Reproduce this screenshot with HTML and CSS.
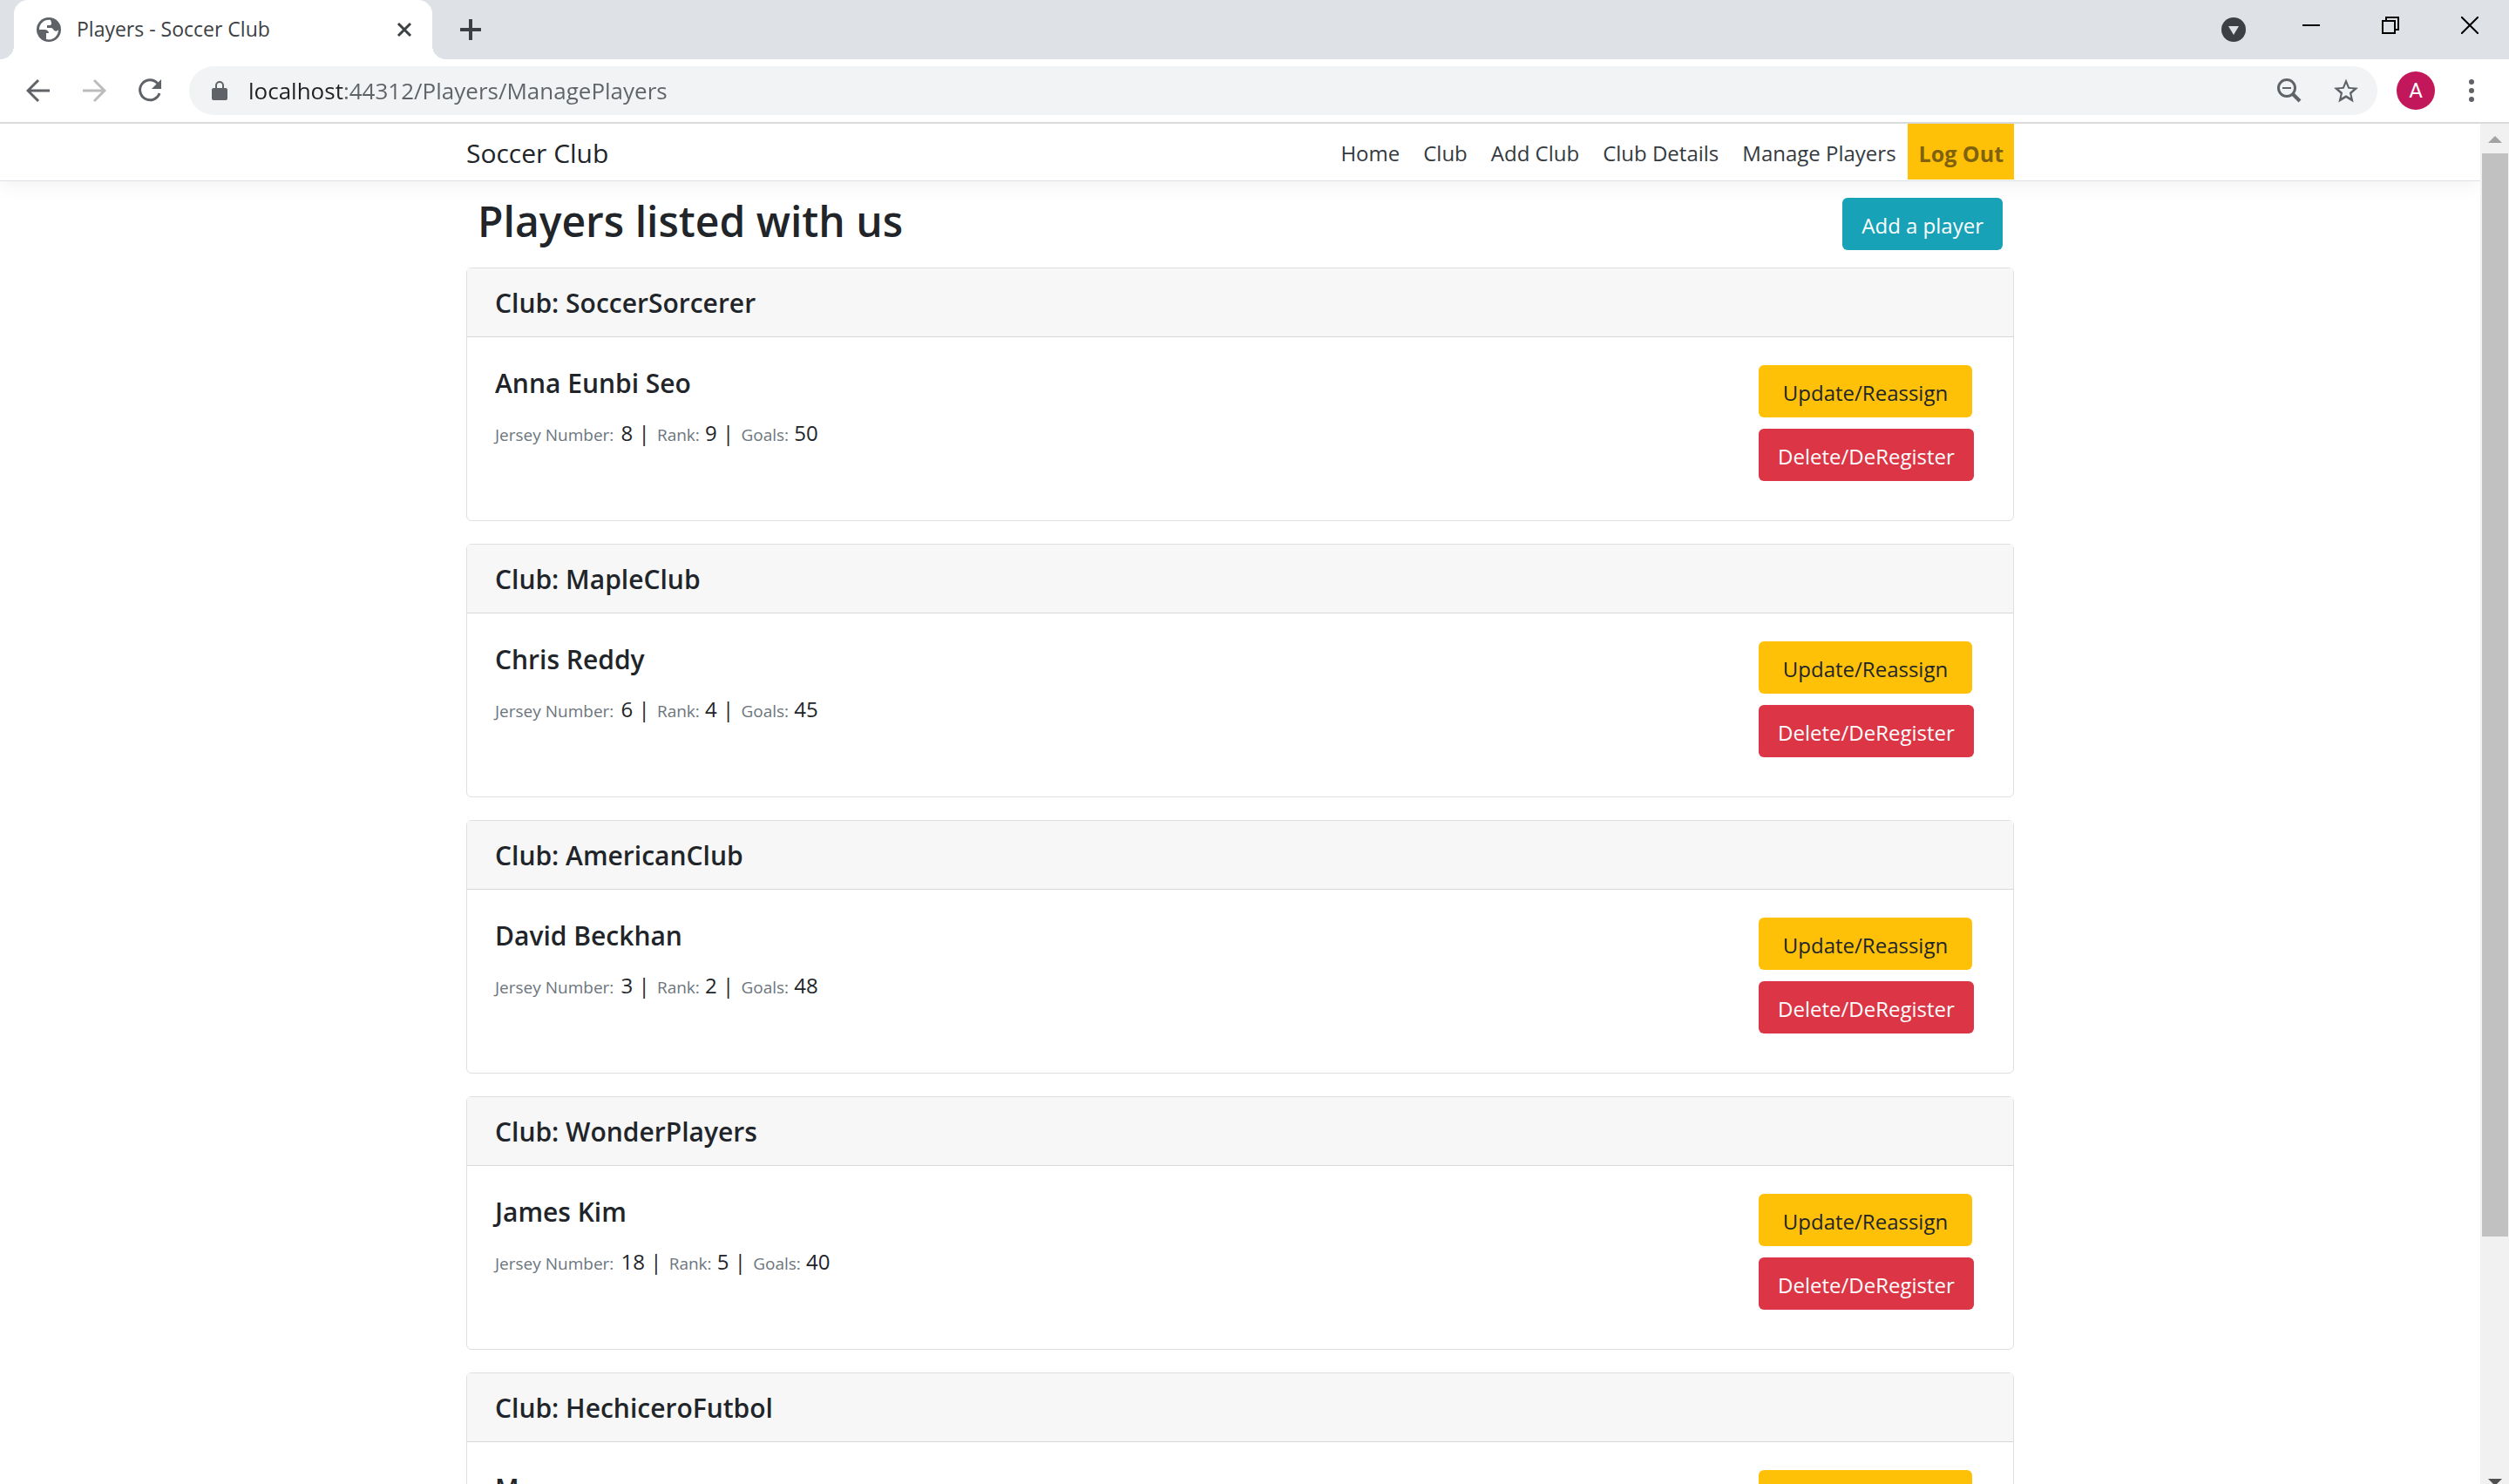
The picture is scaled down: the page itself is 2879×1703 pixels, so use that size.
FILE: index.html
```html
<!DOCTYPE html>
<html lang="en">
<head>
<meta charset="utf-8">
<meta name="viewport" content="width=device-width, initial-scale=1">
<title>Players - Soccer Club</title>
<link rel="stylesheet" href="styles.css">
</head>
<body>
<div class="browser">
  <div class="tabstrip">
    <div class="tab">
      <svg class="favicon" viewBox="0 0 28 28" aria-hidden="true"><circle cx="14" cy="14" r="14" fill="#5f6368"/><path d="M16 3C9 2 3 7 3 14h6c3 0 5 2 5 4h-3v7c8 2 14-4 14-11-1 2-3 2-5 1-1-2-2-3-4-3h-4V9h3c2 0 2-2 2-3z" fill="#fff"/></svg>
      <span class="tab-title">Players - Soccer Club</span>
      <button class="icon-btn" aria-label="Close tab"><svg width="18" height="18" viewBox="0 0 18 18"><path d="M2 2l14 14M16 2L2 16" stroke="#3c4043" stroke-width="3"/></svg></button>
    </div>
    <button class="icon-btn new-tab" aria-label="New tab"><svg width="24" height="24" viewBox="0 0 24 24"><path d="M12 1v22M1 12h22" stroke="#3c4043" stroke-width="4" stroke-linecap="round"/></svg></button>
    <div class="window-controls">
      <button class="icon-btn tab-search" aria-label="Search tabs"><svg width="28" height="28" viewBox="0 0 28 28"><circle cx="14" cy="14" r="14" fill="#3c4043"/><path d="M8 10h12l-6 10z" fill="#dee1e6"/></svg></button>
      <button class="icon-btn" aria-label="Minimize"><svg width="20" height="20" viewBox="0 0 20 20"><path d="M0 10h20" stroke="#000" stroke-width="2"/></svg></button>
      <button class="icon-btn" aria-label="Restore"><svg width="20" height="20" viewBox="0 0 20 20" fill="none" stroke="#000" stroke-width="2"><path d="M1 5h14v14H1zM5 5V1h14v14h-4"/></svg></button>
      <button class="icon-btn" aria-label="Close"><svg width="20" height="20" viewBox="0 0 20 20"><path d="M0 0l20 20M20 0L0 20" stroke="#000" stroke-width="2"/></svg></button>
    </div>
  </div>
  <div class="toolbar">
    <div class="nav-buttons">
      <button class="icon-btn" aria-label="Back"><svg width="28" height="28" viewBox="0 0 28 28" fill="none" stroke="#5f6368" stroke-width="3"><path d="M27 14H3M14 2L2 14l12 12"/></svg></button>
      <button class="icon-btn" aria-label="Forward"><svg width="28" height="28" viewBox="0 0 28 28" fill="none" stroke="#babcbe" stroke-width="3"><path d="M1 14h24M14 2l12 12-12 12"/></svg></button>
      <button class="icon-btn" aria-label="Reload"><svg width="28" height="28" viewBox="0 0 28 28"><path d="M23 6A11.500 11.500 0 1 0 25 17" fill="none" stroke="#5f6368" stroke-width="3"/><path d="M27 1v11H16z" fill="#5f6368"/></svg></button>
    </div>
    <div class="omnibox">
      <svg width="18" height="22" viewBox="0 0 18 22" aria-hidden="true"><rect y="8" width="18" height="14" rx="2" fill="#5f6368"/><path d="M5 9V5a4 4 0 0 1 8 0v4" fill="none" stroke="#5f6368" stroke-width="2"/></svg>
      <input class="url" type="text" aria-label="Address" value="localhost:44312/Players/ManagePlayers">
      <button class="icon-btn" aria-label="Zoom"><svg width="28" height="28" viewBox="0 0 28 28" fill="none" stroke="#5f6368"><circle cx="11" cy="11" r="9.500" stroke-width="3"/><path d="M6 11h10" stroke-width="2"/><path d="M18 18l8 8" stroke-width="4"/></svg></button>
      <button class="icon-btn" aria-label="Bookmark"><svg width="28" height="28" viewBox="0 0 24 24"><path fill="#5f6368" d="M24 9.240l-8.630-.740L12 .500 8.630 8.510 0 9.240l6.550 5.680L4.580 23.500 12 18.980l7.410 4.520-1.960-8.580L24 9.240zM12 16.400l-4.520 2.730 1.200-5.140-3.980-3.460 5.260-.460L12 5.200l2.050 4.880 5.260.460-3.980 3.460 1.200 5.140L12 16.400z"/></svg></button>
    </div>
    <button class="avatar" aria-label="Profile">A</button>
    <button class="icon-btn" aria-label="Menu"><svg width="6" height="26" viewBox="0 0 6 26" fill="#5f6368"><circle cx="3" cy="3" r="3"/><circle cx="3" cy="13" r="3"/><circle cx="3" cy="23" r="3"/></svg></button>
  </div>
  <div class="viewport">
    <div class="page">
      <header class="navbar">
        <div class="container navbar-inner">
          <a class="brand" href="#">Soccer Club</a>
          <nav class="nav">
            <a href="#">Home</a>
            <a href="#">Club</a>
            <a href="#">Add Club</a>
            <a href="#">Club Details</a>
            <a href="#">Manage Players</a>
            <button class="logout">Log Out</button>
          </nav>
        </div>
      </header>
      <main class="container">
        <div class="heading">
          <h1>Players listed with us</h1>
          <button class="btn btn-info">Add a player</button>
        </div>
        <section class="card">
          <h2 class="card-header">Club: SoccerSorcerer</h2>
          <div class="card-body">
            <div>
              <h3>Anna Eunbi Seo</h3>
              <p><small>Jersey Number:</small> 8 | <small class="next">Rank:</small> 9 | <small class="next">Goals:</small> 50</p>
            </div>
            <div class="actions">
              <button class="btn btn-warning">Update/Reassign</button>
              <button class="btn btn-danger">Delete/DeRegister</button>
            </div>
          </div>
        </section>
        <section class="card">
          <h2 class="card-header">Club: MapleClub</h2>
          <div class="card-body">
            <div>
              <h3>Chris Reddy</h3>
              <p><small>Jersey Number:</small> 6 | <small class="next">Rank:</small> 4 | <small class="next">Goals:</small> 45</p>
            </div>
            <div class="actions">
              <button class="btn btn-warning">Update/Reassign</button>
              <button class="btn btn-danger">Delete/DeRegister</button>
            </div>
          </div>
        </section>
        <section class="card">
          <h2 class="card-header">Club: AmericanClub</h2>
          <div class="card-body">
            <div>
              <h3>David Beckhan</h3>
              <p><small>Jersey Number:</small> 3 | <small class="next">Rank:</small> 2 | <small class="next">Goals:</small> 48</p>
            </div>
            <div class="actions">
              <button class="btn btn-warning">Update/Reassign</button>
              <button class="btn btn-danger">Delete/DeRegister</button>
            </div>
          </div>
        </section>
        <section class="card">
          <h2 class="card-header">Club: WonderPlayers</h2>
          <div class="card-body">
            <div>
              <h3>James Kim</h3>
              <p><small>Jersey Number:</small> 18 | <small class="next">Rank:</small> 5 | <small class="next">Goals:</small> 40</p>
            </div>
            <div class="actions">
              <button class="btn btn-warning">Update/Reassign</button>
              <button class="btn btn-danger">Delete/DeRegister</button>
            </div>
          </div>
        </section>
        <section class="card">
          <h2 class="card-header">Club: HechiceroFutbol</h2>
          <div class="card-body">
            <div>
              <h3>M</h3>
            </div>
            <div class="actions">
              <button class="btn btn-warning" aria-label="Update/Reassign"></button>
            </div>
          </div>
        </section>
      </main>
    </div>
    <div class="scrollbar" aria-hidden="true">
      <svg class="arrow" width="16" height="8" viewBox="0 0 16 8"><path d="M0 8l8-8 8 8z" fill="#a3a3a3"/></svg>
      <div class="track"><div class="thumb"></div></div>
      <svg class="arrow-down" width="16" height="8" viewBox="0 0 16 8"><path d="M0 0l8 8 8-8z" fill="#505050"/></svg>
    </div>
  </div>
</div>
</body>
</html>
```
FILE: styles.css
```css
* { box-sizing: border-box; }

body {
  margin: 0;
  font: 24px/38px "Segoe UI", "Open Sans", "Noto Sans", sans-serif;
  color: #212529;
  background: #fff;
}

button, input { font: inherit; color: inherit; border: 0; margin: 0; padding: 0; background: none; }
button { cursor: pointer; }
a { color: inherit; text-decoration: none; }
svg { display: block; flex: none; }

.browser { display: flex; flex-direction: column; height: 100vh; overflow: hidden; }

.icon-btn { display: flex; align-items: center; justify-content: center; flex: none; }

/* Tab strip */
.tabstrip { display: flex; height: 68px; flex: none; padding-left: 16px; background: #dee1e6; }
.tab {
  position: relative;
  display: flex;
  align-items: center;
  width: 480px;
  padding: 0 23px 0 26px;
  background: #fff;
  border-radius: 16px 16px 0 0;
}
.tab::before, .tab::after {
  content: "";
  position: absolute;
  bottom: 0;
  width: 16px;
  height: 16px;
}
.tab::before { right: 100%; background: radial-gradient(circle at 0 0, transparent 16px, #fff 16px); }
.tab::after { left: 100%; background: radial-gradient(circle at 100% 0, transparent 16px, #fff 16px); }
.favicon { width: 28px; height: 28px; }
.tab-title { flex: 1; margin-left: 18px; padding-bottom: 2px; font-size: 23px; color: #3c4043; }
.new-tab { width: 88px; }
.window-controls { display: flex; gap: 71px; align-items: flex-start; margin-left: auto; padding: 19px 35px 0 0; }
.tab-search { margin: 1px -6px 0 0; }

/* Toolbar */
.toolbar {
  display: flex;
  align-items: center;
  flex: none;
  height: 74px;
  padding: 0 40px 0 30px;
  border-bottom: 2px solid #d9dadc;
}
.nav-buttons { display: flex; gap: 36px; margin-right: 31px; }
.omnibox {
  display: flex;
  align-items: center;
  flex: 1;
  height: 56px;
  padding: 0 22px 0 26px;
  border-radius: 28px;
  background: #f1f3f4;
}
.url {
  flex: 1;
  min-width: 0;
  margin-left: 24px;
  font-size: 26px;
  color: transparent;
  caret-color: #202124;
  background: linear-gradient(90deg, #202124 111px, #5f6368 111px);
  -webkit-background-clip: text;
  background-clip: text;
  outline: 0;
}
.omnibox .icon-btn { margin-left: 37px; }
.avatar {
  width: 44px;
  height: 44px;
  margin: 0 39px 0 22px;
  border-radius: 50%;
  background: #c2185b;
  color: #fff;
  font-family: Roboto, sans-serif;
}

/* Page area */
.viewport { display: flex; flex: 1; min-height: 0; }
.page { flex: 1; min-width: 0; overflow: hidden; }
.container { max-width: 1776px; margin: 0 auto; }

.navbar { border-bottom: 1px solid #dee2e6; box-shadow: 0 6px 20px rgba(0, 0, 0, .05); }
.navbar-inner { display: flex; justify-content: space-between; align-items: center; height: 65px; }
.brand { padding-top: 2px; font-size: 30px; }
.nav { display: flex; align-self: stretch; padding-bottom: 1px; color: #343a40; }
.nav a { display: flex; align-items: center; padding: 4px 13px 0 14px; }
.logout { padding: 4px 12px 0 13px; background: #ffc107; color: #80610e; font-size: 25px; font-weight: 700; }

.heading { display: flex; justify-content: space-between; align-items: flex-start; padding: 19px 13px 20px; }
h1, h2, h3, p { margin: 0; font-weight: 600; }
h1 { font-size: 48px; line-height: 54px; }

.btn { height: 60px; padding: 4px 22px 0; border-radius: 6px; }
.btn-info { background: #17a2b8; color: #fff; }
.btn-warning { background: #ffc107; width: 245px; }
.btn-danger { background: #dc3545; color: #fff; width: 247px; }

.card { min-height: 291px; margin-bottom: 26px; border: 1px solid #dfdfdf; border-radius: 6px; }
.card-header {
  height: 79px;
  padding: 21px 32px;
  border-bottom: 1px solid #d8d8d8;
  background: #f7f7f7;
  font-size: 30px;
}
.card-body { display: flex; justify-content: space-between; padding: 32px 45px 0 32px; }
.btn-danger, .btn-warning { padding: 4px 0 0; }
h3 { font-size: 30px; line-height: 42px; }
p { margin-top: 17px; font-weight: 400; }
small { margin-right: 2px; font-size: 19px; color: #6c757d; }
.next { margin: 0 0 0 2px; }
.actions { display: flex; flex-direction: column; gap: 13px; width: 247px; }

/* Scrollbar */
.scrollbar { display: flex; flex-direction: column; align-items: center; width: 33px; background: #f1f1f1; }
.arrow { margin: 14px 0 12px; }
.track { flex: 1; align-self: stretch; padding: 0 1px 0 2px; }
.thumb { height: 81.7%; background: #c1c1c1; }
.arrow-down { margin-bottom: -2px; }
```
